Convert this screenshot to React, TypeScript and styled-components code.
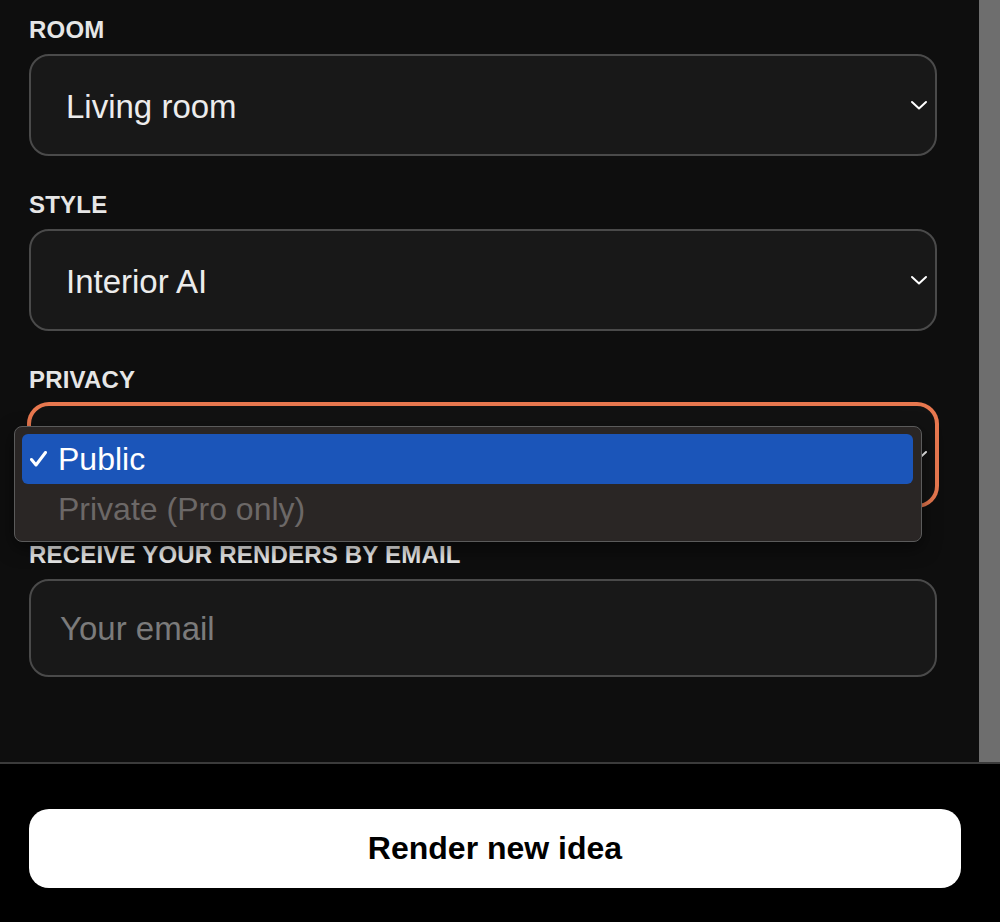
import styled, { createGlobalStyle } from "styled-components"

const GlobalStyle = createGlobalStyle`
  body {
    margin: 0;
    background: #000;
    font-family: "Liberation Sans", Arial, sans-serif;
  }
`

const Page = styled('div')`
  display: flex;
  flex-direction: column;
  height: 922px;
  background: #000;
`

const ScrollArea = styled('div')`
  display: flex;
  height: 762px;
  border-bottom: 2px solid #3b3b3b;
`

const Form = styled('div')`
  flex: 1;
  display: flex;
  flex-direction: column;
  gap: 35px;
  padding: 16px 42px 0 29px;
  background: #0e0e0e;
`

const ScrollTrack = styled('div')`
  width: 21px;
  background: #6e6e6e;
`

const Field = styled('div')`
  display: flex;
  flex-direction: column;
  gap: 10px;
`

const Label = styled('label')`
  font-size: 24px;
  line-height: 28px;
  font-weight: 700;
  letter-spacing: 0.2px;
  color: #e6e6e6;
`

const SelectBox = styled('div')<{ $focused?: boolean }>`
  position: relative;
  box-sizing: border-box;
  height: 102px;
  display: flex;
  align-items: center;
  padding: 3px 7px 0 35px;
  border: 2px solid ${p => (p.$focused ? '#e8784f' : '#4a4a4a')};
  box-shadow: ${p => (p.$focused ? '0 0 0 2px #e8784f' : 'none')};
  border-radius: 20px;
  background: ${p => (p.$focused ? '#121212' : '#181818')};
  color: #ececec;
  font-size: 33px;
`

const Chevron = styled('svg')`
  margin-left: auto;
  margin-top: -3px;
  flex-shrink: 0;
`

const EmailInput = styled('input')`
  box-sizing: border-box;
  height: 98px;
  width: 100%;
  padding: 2px 0 0 29px;
  border: 2px solid #4a4a4a;
  border-radius: 20px;
  background: #181818;
  color: #ececec;
  font-family: "Liberation Sans", Arial, sans-serif;
  font-size: 33px;
  outline: none;
  &::placeholder {
    color: #7b7b7b;
  }
`

const Menu = styled('div')`
  position: absolute;
  top: 20px;
  left: -17px;
  width: 908px;
  box-sizing: border-box;
  padding: 7px 8px 7px 7px;
  background: #2a2625;
  border: 1px solid #5b5b5b;
  border-radius: 8px;
  box-shadow: 0 6px 18px rgba(0, 0, 0, 0.5);
  z-index: 2;
`

const Option = styled('div')<{ $selected?: boolean; $disabled?: boolean }>`
  height: 50px;
  display: flex;
  align-items: center;
  gap: 11px;
  padding-left: 8px;
  border-radius: 6px;
  font-size: 32px;
  background: ${p => (p.$selected ? '#1b55b9' : 'transparent')};
  color: ${p => (p.$disabled ? '#6c6867' : '#ffffff')};
`

const CheckSlot = styled('span')`
  width: 17px;
  display: flex;
  align-items: center;
`

const Footer = styled('div')`
  flex: 1;
  display: flex;
  align-items: flex-start;
  padding: 45px 39px 0 29px;
`

const RenderButton = styled('button')`
  width: 100%;
  height: 79px;
  border: none;
  border-radius: 20px;
  background: #ffffff;
  color: #000;
  font-family: "Liberation Sans", Arial, sans-serif;
  font-size: 32px;
  font-weight: 700;
`

const ChevronIcon = () => (
  <Chevron width="18" height="10" viewBox="0 0 18 10">
    <polyline points="2,2 9,8.5 16,2" fill="none" stroke="#fff" strokeWidth="2" strokeLinecap="round" strokeLinejoin="round" />
  </Chevron>
)

export default function App() {
  return (
    <>
      <GlobalStyle />
      <Page>
        <ScrollArea>
          <Form>
            <Field>
              <Label>ROOM</Label>
              <SelectBox>
                Living room
                <ChevronIcon />
              </SelectBox>
            </Field>

            <Field>
              <Label>STYLE</Label>
              <SelectBox>
                Interior AI
                <ChevronIcon />
              </SelectBox>
            </Field>

            <Field>
              <Label>PRIVACY</Label>
              <SelectBox $focused>
                <ChevronIcon />
                {/* open native menu */}
                <Menu>
                  <Option $selected>
                    <CheckSlot>
                      <svg width="17" height="16" viewBox="0 0 17 16">
                        <polyline points="1.5,8.5 6,14 15.5,1.5" fill="none" stroke="#fff" strokeWidth="3" strokeLinecap="round" strokeLinejoin="round" />
                      </svg>
                    </CheckSlot>
                    Public
                  </Option>
                  <Option $disabled>
                    <CheckSlot />
                    Private (Pro only)
                  </Option>
                </Menu>
              </SelectBox>
            </Field>

            <Field>
              <Label>RECEIVE YOUR RENDERS BY EMAIL</Label>
              <EmailInput placeholder="Your email" />
            </Field>
          </Form>
          <ScrollTrack />
        </ScrollArea>

        <Footer>
          <RenderButton>Render new idea</RenderButton>
        </Footer>
      </Page>
    </>
  )
}
